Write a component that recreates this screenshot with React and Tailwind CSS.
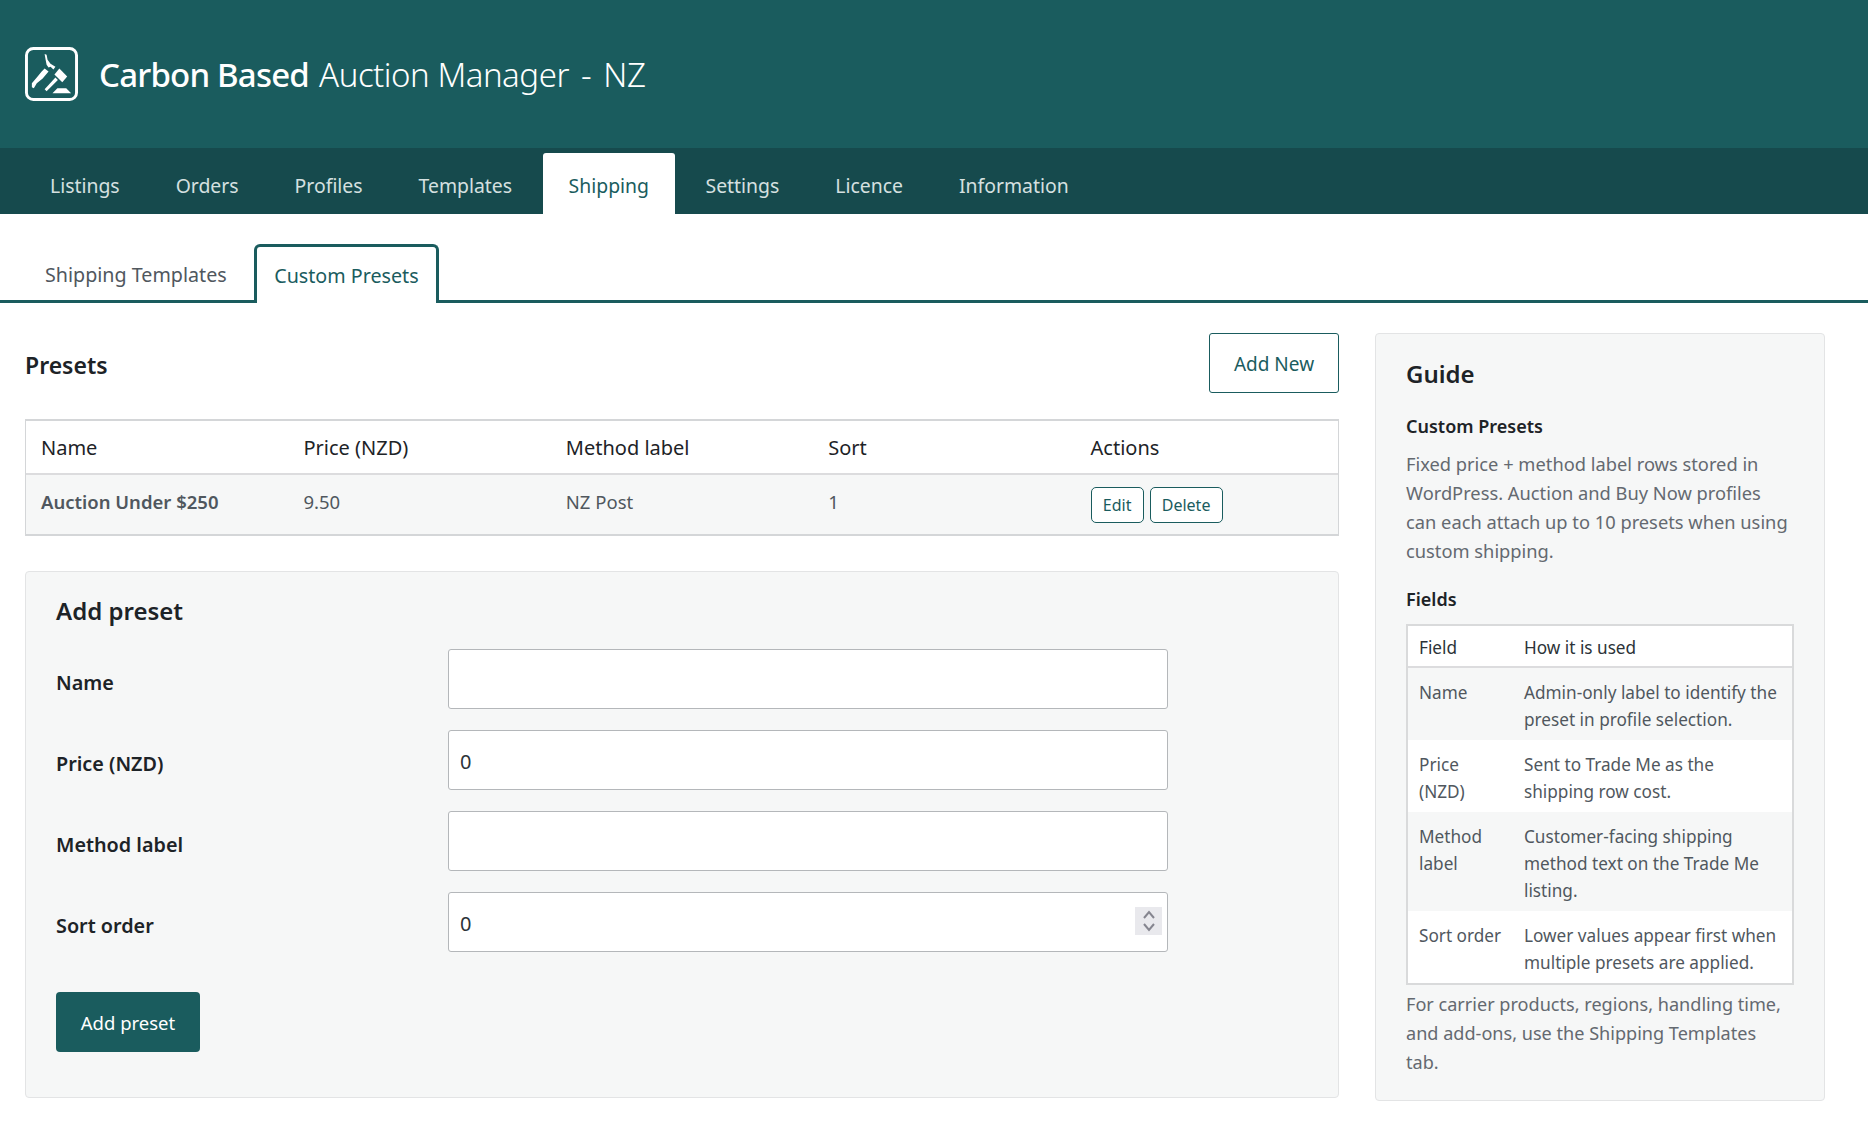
const FONT = "font-['Noto_Sans',sans-serif]";

function Logo() {
  return (
    <svg width="53" height="54" viewBox="0 0 54 55" fill="none" className="shrink-0">
      <rect x="1.500" y="1.500" width="51" height="52" rx="7" stroke="#ffffff" strokeWidth="3" />
      <path fill="#ffffff" d="M20 7l2 1 1 5 3 4 5 3-2 3-3-3-2 1-2-3-1-5z" />
      <path fill="#ffffff" d="M20 22l4 3-6 7-6 5-3 5-2-1v-4l5-6 5-6z" />
      <path fill="#ffffff" d="M35 22l8 8-5 6-8-8z" />
      <path fill="#ffffff" d="M31 31l2.500 2.500L22 45l-2-2z" />
      <path fill="#ffffff" d="M33 42h9l2 2 3 3H28l3-3z" />
    </svg>
  );
}

const navItems = ["Listings", "Orders", "Profiles", "Templates", "Shipping", "Settings", "Licence", "Information"];

function Field({ label, value, spin }) {
  return (
    <div className="flex items-center h-[60px] mb-[21px]">
      <label className="w-[392px] shrink-0 text-[19.800px] font-semibold text-[#1d2327] pt-[7px]">{label}</label>
      <div className="relative w-[720px]">
        <input
          readOnly
          value={value}
          className="w-full h-[60px] px-[11px] pt-[2px] bg-white border border-[#b4b7ba] rounded-[3px] text-[20px] text-[#2c3338] outline-none"
        />
        {spin && (
          <div className="absolute right-[6px] top-[15px] w-[27px] h-[28px] bg-[#e9e9ed] flex items-center justify-center">
            <svg width="12" height="22" viewBox="0 0 12 22" fill="none" stroke="#85858f" strokeWidth="2">
              <path d="M1 8l5-6 5 6M1 14l5 6 5-6" />
            </svg>
          </div>
        )}
      </div>
    </div>
  );
}

const guideRows = [
  ["Name", "Admin-only label to identify the preset in profile selection."],
  ["Price (NZD)", "Sent to Trade Me as the shipping row cost."],
  ["Method label", "Customer-facing shipping method text on the Trade Me listing."],
  ["Sort order", "Lower values appear first when multiple presets are applied."],
];

export default function App() {
  return (
    <div className={`${FONT} w-[1868px] h-[1133px] overflow-hidden bg-white text-[#1d2327]`}>
      <header className="h-[148px] bg-[#1a5c5e] flex items-center pl-[25px] pb-[1px]">
        <Logo />
        <h1 className="ml-[21px] pt-[2px] text-[33px] text-white font-light leading-none tracking-[-0.47px]">
          <span className="font-medium tracking-[-0.8px] mr-[2px]">Carbon Based</span> Auction Manager <span className="mx-[4px]">-</span> NZ
        </h1>
      </header>
      <nav className="h-[66px] bg-[#164a4d] flex items-end pl-[25px] gap-[6px]">
        {navItems.map((n) =>
          n === "Shipping" ? (
            <a key={n} className="h-[61px] px-[25.500px] pt-[5px] flex items-center bg-white text-[#1a5c5e] text-[19.400px] rounded-t-[3px]">
              {n}
            </a>
          ) : (
            <a key={n} className="h-[61px] px-[25px] pt-[5px] flex items-center text-[#d5e0e0] text-[19.400px]">
              {n}
            </a>
          )
        )}
      </nav>
      <div className="h-[89px] border-b-[3px] border-[#1a5c5e] flex items-end pl-[25px] gap-[7px]">
        <a className="h-[58px] px-[20px] flex items-center text-[19.700px] text-[#50575e] -mb-[3px] pt-[1px]">Shipping Templates</a>
        <a className="h-[59px] -mb-[3px] px-[17.500px] pt-[1px] flex items-center text-[19.700px] text-[#1a5c5e] bg-white border-[3px] border-b-0 border-[#1a5c5e] rounded-t-[6px]">
          Custom Presets
        </a>
      </div>
      <main className="flex pl-[25px] pt-[30px] gap-[36px]">
        <div className="w-[1314px] shrink-0">
          <div className="flex items-center justify-between h-[60px]">
            <h2 className="text-[23px] font-semibold text-[#1d2327] pt-1">Presets</h2>
            <a className="w-[130px] h-[60px] pt-[2px] flex items-center justify-center border border-[#1a5c5e] rounded-[3px] text-[#1a5c5e] text-[19px]">Add New</a>
          </div>
          <div className="mt-[26px] border border-[#d4d6d8] border-t-2 border-b-2">
            <div className="grid grid-cols-5 h-[54px] pt-[1px] items-center text-[20px] text-[#1d2327] bg-white border-b-2 border-[#dcdcde]">
              <div className="pl-[15px]">Name</div>
              <div className="pl-[15px]">Price (NZD)</div>
              <div className="pl-[15px]">Method label</div>
              <div className="pl-[15px]">Sort</div>
              <div className="pl-[15px]">Actions</div>
            </div>
            <div className="grid grid-cols-5 h-[59px] items-center text-[18.500px] text-[#50575e] bg-[#f6f7f7]">
              <div className="pl-[15px] font-semibold pb-[6px]">Auction Under $250</div>
              <div className="pl-[15px] pb-[6px]">9.50</div>
              <div className="pl-[15px] pb-[6px]">NZ Post</div>
              <div className="pl-[15px] pb-[6px]">1</div>
              <div className="pl-[15px] flex gap-[6px]">
                <a className="w-[53px] h-[36px] flex items-center justify-center bg-white border border-[#1a5c5e] rounded-[5px] text-[#1a5c5e] text-[16px]">Edit</a>
                <a className="w-[73px] h-[36px] flex items-center justify-center bg-white border border-[#1a5c5e] rounded-[5px] text-[#1a5c5e] text-[16px]">Delete</a>
              </div>
            </div>
          </div>
          <section className="mt-[35px] h-[527px] border border-[#e3e4e5] rounded-[4px] bg-[#f6f7f7] pl-[30px] pt-[20px]">
            <h2 className="text-[24px] leading-[38px] font-semibold text-[#1d2327]">Add preset</h2>
            <div className="mt-[19px]">
              <Field label="Name" value="" />
              <Field label="Price (NZD)" value="0" />
              <Field label="Method label" value="" />
              <Field label="Sort order" value="0" spin />
            </div>
            <button className="mt-[19px] w-[144px] h-[60px] pt-[2px] rounded-[4px] bg-[#1a5c5e] text-white text-[18.500px]">Add preset</button>
          </section>
        </div>
        <aside className="w-[450px] h-[768px] shrink-0 border border-[#e3e4e5] rounded-[4px] bg-[#f6f7f7] px-[30px] pt-[22px]">
          <h2 className="text-[24px] leading-[36px] font-semibold text-[#1d2327]">Guide</h2>
          <h3 className="mt-[20px] text-[18px] leading-[28px] font-semibold text-[#1d2327]">Custom Presets</h3>
          <p className="mt-[9px] text-[18.300px] leading-[29px] text-[#646970]">
            Fixed price + method label rows stored in WordPress. Auction and Buy Now profiles can each attach up to 10 presets when using custom shipping.
          </p>
          <h3 className="mt-[20px] text-[18px] leading-[28px] font-semibold text-[#1d2327]">Fields</h3>
          <div className="mt-[11px] border-2 border-[#d9dadb] w-[388px] -mr-2">
            <div className="flex h-[42px] items-center pt-[3px] bg-white border-b-2 border-[#dcdcde] text-[17.200px] text-[#2c3338]">
              <div className="w-[116px] pl-[11px] shrink-0">Field</div>
              <div>How it is used</div>
            </div>
            {guideRows.map(([a, b], i) => (
              <div key={a} className={`flex pt-[11px] pb-[7px] text-[17.200px] leading-[27px] text-[#50575e] ${i % 2 === 0 ? "bg-[#f6f7f7]" : "bg-white"}`}>
                <div className="w-[116px] pl-[11px] pr-[17px] shrink-0">{a}</div>
                <div className="pr-[12px]">{b}</div>
              </div>
            ))}
          </div>
          <p className="mt-[5px] pr-[8px] text-[18.100px] leading-[29px] text-[#646970]">
            For carrier products, regions, handling time, and add-ons, use the Shipping Templates tab.
          </p>
        </aside>
      </main>
    </div>
  );
}
